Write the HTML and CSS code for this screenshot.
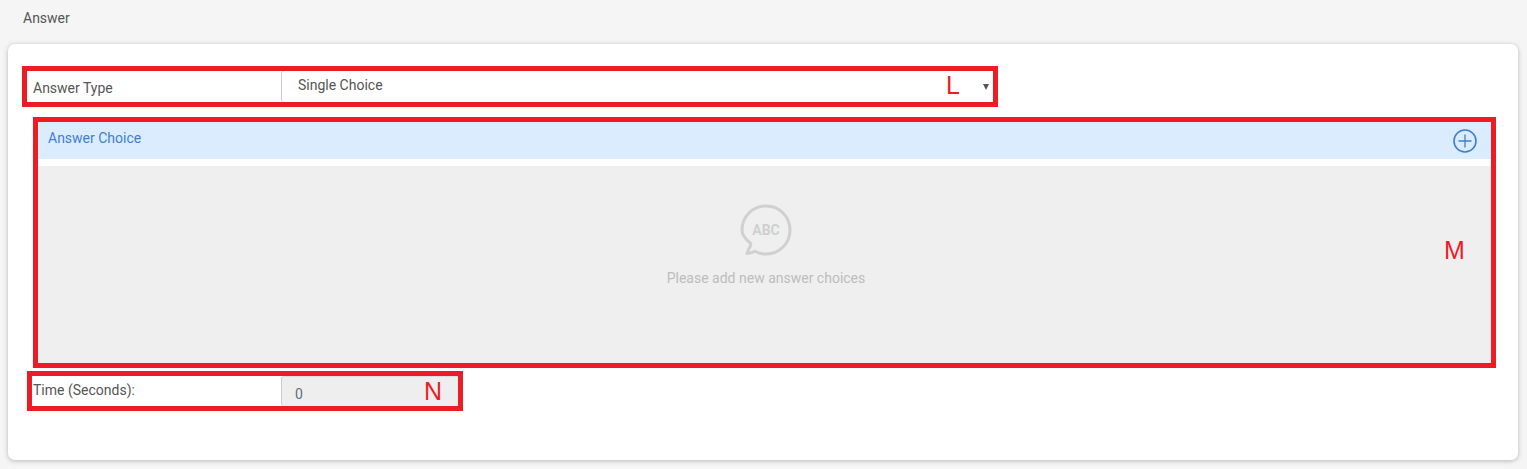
FILE: index.html
```html
<!DOCTYPE html>
<html lang="en">
<head>
  <meta charset="UTF-8">
  <title>Answer</title>
  <link rel="stylesheet" href="styles.css">
</head>
<body>
  <div class="page-title">Answer</div>

  <div class="card">
    <div class="mark mark-type">
      <div class="field">
        <label class="field-label label-type">Answer Type</label>
        <div class="select-box">
          <span>Single Choice</span>
          <span class="letter letter-l">L</span>
          <span class="caret"></span>
        </div>
      </div>
    </div>

    <div class="mark mark-choices">
      <div class="choice-head">
        <span>Answer Choice</span>
        <svg class="add-icon" width="26" height="26" viewBox="0 0 26 26">
          <circle cx="13" cy="13" r="11" fill="none" stroke="#3f7fd0" stroke-width="1.6"/>
          <path d="M13 6.500V19.500M6.500 13H19.500" fill="none" stroke="#3f7fd0" stroke-width="1.3"/>
        </svg>
      </div>
      <div class="choice-empty">
        <svg class="abc-icon" width="54" height="54" viewBox="0 0 54 54">
          <path d="M9.500 46.500 C11 44.500 11.800 42.500 11.800 40.500 C6 36 3 31.500 3 27 C3 13.500 13.500 3 27 3 C40.500 3 51 13.500 51 27 C51 40.500 40.500 51 27 51 C22.500 51 19 50 16 48.300 C14 49.500 12 50 8 50.500 Z" fill="none" stroke="#d0d0d0" stroke-width="3" stroke-linejoin="round"/>
          <text x="27" y="32" text-anchor="middle" class="abc-text">ABC</text>
        </svg>
        <p class="empty-text">Please add new answer choices</p>
        <span class="letter letter-m">M</span>
      </div>
    </div>

    <div class="mark mark-time">
      <div class="field">
        <label class="field-label label-time">Time (Seconds):</label>
        <div class="time-box">
          <span>0</span>
          <span class="letter letter-n">N</span>
        </div>
      </div>
    </div>
  </div>
</body>
</html>
```

FILE: styles.css
```css
* {
  box-sizing: border-box;
}

body {
  margin: 0;
  height: 469px;
  overflow: hidden;
  background: #f5f5f5;
  font-family: Roboto, "Liberation Sans", sans-serif;
  font-size: 14px;
  color: #555;
}

.page-title {
  height: 44px;
  padding: 10px 0 0 23px;
  line-height: 17px;
}

.card {
  margin: 0 9px 0 8px;
  height: 416px;
  padding-top: 22px;
  background: white;
  border-radius: 7px;
  box-shadow: 0 1px 5px rgba(0,0,0,0.25);
}

.mark {
  border: 5px solid #ed1c24;
}

.mark-type {
  width: 976px;
  height: 41px;
  margin-left: 14px;
}

.mark-choices {
  width: 1463px;
  height: 251px;
  margin: 10px 0 0 25px;
}

.mark-time {
  width: 436px;
  height: 40px;
  margin: 3px 0 0 19px;
}

.field {
  display: flex;
  height: 100%;
}

.field-label {
  flex: none;
  padding-left: 6px;
  line-height: 17px;
}

.label-type {
  width: 254px;
  padding-top: 9px;
}

.label-time {
  width: 249px;
  padding: 6px 0 0 1px;
}

.select-box {
  flex: 1;
  position: relative;
  display: flex;
  justify-content: space-between;
  align-items: center;
  padding: 0 4px 3px 16px;
  border-left: 1px solid #ccc;
  border-radius: 3px 0 0 3px;
}

.caret {
  width: 0;
  height: 0;
  margin-top: 4px;
  border-left: 3.500px solid transparent;
  border-right: 3.500px solid transparent;
  border-top: 6px solid #555;
}

.choice-head {
  display: flex;
  justify-content: space-between;
  align-items: center;
  height: 37px;
  padding: 0 13px 6px 10px;
  background: #dbecfe;
  color: #3f7fd0;
}

.add-icon {
  margin-top: 6px;
}

.choice-empty {
  position: relative;
  height: 197px;
  margin-top: 7px;
  padding: 37px 0 0 3px;
  background: #efefef;
  text-align: center;
}

.abc-icon {
  display: block;
  margin: 0 auto;
}

.abc-text {
  font-family: Roboto, sans-serif;
  font-size: 14px;
  font-weight: 700;
  fill: #d0d0d0;
}

.empty-text {
  margin: 13px 0 0;
  line-height: 17px;
  color: #bdbdbd;
}

.time-box {
  flex: 1;
  position: relative;
  padding: 9px 0 0 13px;
  line-height: 17px;
  background: #eee;
  border-left: 1px solid #ccc;
  border-top: 1px solid #ddd;
  border-radius: 3px 0 0 3px;
  color: #5f6f80;
}

.letter {
  position: absolute;
  font-family: "Liberation Sans", sans-serif;
  font-size: 25px;
  line-height: 28px;
  color: #ed1c24;
}

.letter-l {
  left: 664px;
  top: 0;
}

.letter-m {
  left: 1406px;
  top: 70px;
}

.letter-n {
  left: 142px;
  top: 0;
}
```
